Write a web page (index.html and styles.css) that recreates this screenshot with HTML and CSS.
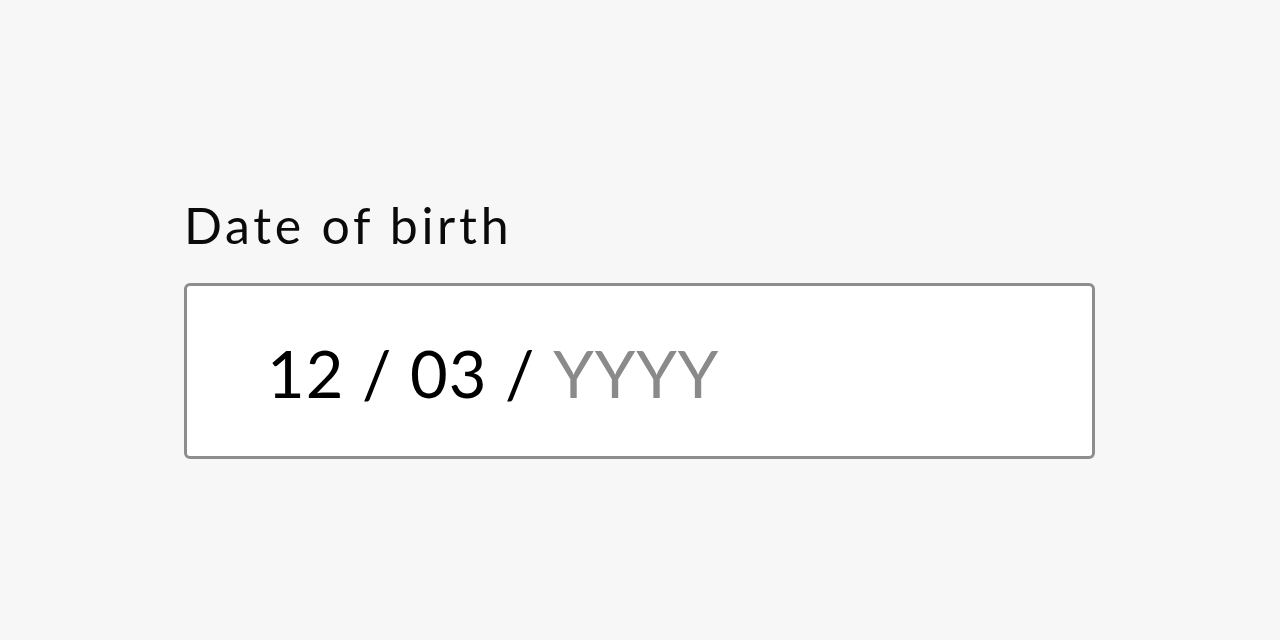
FILE: index.html
```html
<!DOCTYPE html>
<html lang="en">
<head>
<meta charset="utf-8">
<title>Date of birth</title>
<link rel="stylesheet" href="styles.css">
</head>
<body>
<main class="page">
  <div class="field">
    <label class="field-label" for="dob">Date of birth</label>
    <div class="date-input" id="dob">
      <span class="value">12 / 03 / </span><span class="placeholder">YYYY</span>
    </div>
  </div>
</main>
</body>
</html>
```

FILE: styles.css
```css
html, body {
  margin: 0;
  padding: 0;
  background: #f7f7f7;
}
.page {
  width: 1280px;
  height: 640px;
  display: flex;
  flex-direction: column;
  padding: 190px 0 0 184px;
  box-sizing: border-box;
  font-family: Lato, "Open Sans", sans-serif;
}
.field {
  display: flex;
  flex-direction: column;
  gap: 23px;
  width: 911px;
}
.field-label {
  font-size: 50px;
  line-height: 70px;
  letter-spacing: 3.7px;
  color: #0a0a0a;
  display: block;
}
.date-input {
  box-sizing: border-box;
  height: 176px;
  background: #fff;
  border: 3px solid #8d8d8f;
  border-radius: 6px;
  display: flex;
  align-items: center;
  padding: 3px 0 0 80px;
  font-size: 65px;
  letter-spacing: 1px;
  color: #000;
  white-space: pre;
}
.placeholder {
  color: #8a8a8a;
}
```
